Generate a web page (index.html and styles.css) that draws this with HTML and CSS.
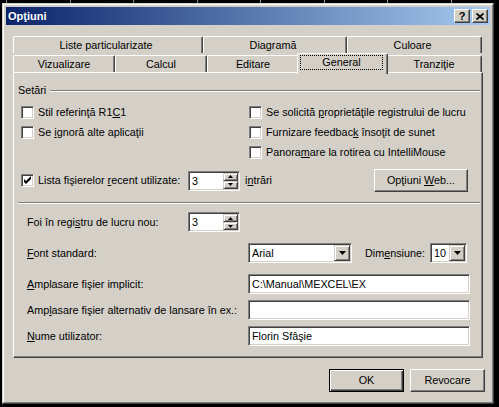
FILE: index.html
```html
<!DOCTYPE html>
<html lang="ro">
<head>
<meta charset="utf-8">
<title>Opţiuni</title>
<link rel="stylesheet" href="styles.css">
</head>
<body>
<div class="desk"></div>
<div class="window">
  <div class="frame">
    <div class="titlebar">
      <span class="title">Opţiuni</span>
      <span class="capbtn">?</span>
      <span class="capbtn"><svg class="xicon" viewBox="0 0 8 7" width="8" height="7"><path d="M0.5 0.5 L7.5 6.5 M7.5 0.5 L0.5 6.5" stroke="#000" stroke-width="1.7" fill="none"/></svg></span>
    </div>
    <div class="client">
      <div class="tabs">
        <div class="tabrow row1">
          <div class="tab t-liste">Liste particularizate</div>
          <div class="tab t-diag">Diagramă</div>
          <div class="tab t-cul">Culoare</div>
        </div>
        <div class="tabrow row2">
          <div class="tab t-viz">Vizualizare</div>
          <div class="tab t-calc">Calcul</div>
          <div class="tab t-edit">Editare</div>
          <div class="tab t-gen active"><span class="focus">General</span></div>
          <div class="tab t-tranz">Tranziţie</div>
        </div>
      </div>
      <div class="panel">
        <div class="group-head"><span>Setări</span><span class="etch"></span></div>
        <div class="checks">
          <div class="chk"><span class="box"></span><span>Stil referinţă R1<u>C</u>1</span></div>
          <div class="chk"><span class="box"></span><span>Se solicită <u>p</u>roprietăţile registrului de lucru</span></div>
          <div class="chk"><span class="box"></span><span>Se <u>i</u>gnoră alte aplicaţii</span></div>
          <div class="chk"><span class="box"></span><span>Furnizare feedbac<u>k</u> însoţit de sunet</span></div>
          <div></div>
          <div class="chk"><span class="box"></span><span>Panora<u>m</u>are la rotirea cu IntelliMouse</span></div>
        </div>
        <div class="recent">
          <div class="chk recent-label"><span class="box"><svg viewBox="0 0 11 11" width="11" height="11"><path d="M2 4 L4 6 L9 1 L9 4 L4 9 L2 7 Z" fill="#000"/></svg></span><span>Lista fişierelor <u>r</u>ecent utilizate:</span></div>
          <div class="spin">
            <span class="spin-val">3</span>
            <span class="spin-btns">
              <span class="sbtn"><svg viewBox="0 0 5 3" width="5" height="3"><path d="M2.5 0 L5 3 L0 3 Z" fill="#000"/></svg></span>
              <span class="sbtn"><svg viewBox="0 0 5 3" width="5" height="3"><path d="M0 0 L5 0 L2.5 3 Z" fill="#000"/></svg></span>
            </span>
          </div>
          <span class="unit">i<u>n</u>trări</span>
          <button class="btn web"><span>Opţiuni <u>W</u>eb...</span></button>
        </div>
        <div class="sep"></div>
        <div class="field row-foi">
          <span class="flabel lab-foi">Foi în regi<u>s</u>tru de lucru nou:</span>
          <div class="spin">
            <span class="spin-val">3</span>
            <span class="spin-btns">
              <span class="sbtn"><svg viewBox="0 0 5 3" width="5" height="3"><path d="M2.5 0 L5 3 L0 3 Z" fill="#000"/></svg></span>
              <span class="sbtn"><svg viewBox="0 0 5 3" width="5" height="3"><path d="M0 0 L5 0 L2.5 3 Z" fill="#000"/></svg></span>
            </span>
          </div>
        </div>
        <div class="field row-font">
          <span class="flabel lab-wide"><u>F</u>ont standard:</span>
          <div class="combo combo-font"><span class="combo-val">Arial</span><span class="dd"><svg viewBox="0 0 7 4" width="7" height="4"><path d="M0 0 H7 L3.5 4 Z" fill="#000"/></svg></span></div>
          <span class="flabel lab-dim">Dim<u>e</u>nsiune:</span>
          <div class="combo combo-size"><span class="combo-val">10</span><span class="dd"><svg viewBox="0 0 7 4" width="7" height="4"><path d="M0 0 H7 L3.5 4 Z" fill="#000"/></svg></span></div>
        </div>
        <div class="field row-impl">
          <span class="flabel lab-wide"><u>A</u>mplasare fişier implicit:</span>
          <div class="edit">C:\Manual\MEXCEL\EX</div>
        </div>
        <div class="field row-alt">
          <span class="flabel lab-wide">Amp<u>l</u>asare fişier alternativ de lansare în ex.:</span>
          <div class="edit"></div>
        </div>
        <div class="field row-user">
          <span class="flabel lab-wide"><u>N</u>ume utilizator:</span>
          <div class="edit">Florin Sfâşie</div>
        </div>
      </div>
      <div class="actions">
        <button class="btn default"><span>OK</span></button>
        <button class="btn"><span>Revocare</span></button>
      </div>
    </div>
  </div>
</div>
</body>
</html>
```
FILE: styles.css
```css
* { box-sizing: border-box; }
html, body { margin: 0; padding: 0; }
body {
  width: 499px;
  height: 407px;
  overflow: hidden;
  background: #000;
  font-family: "Liberation Sans", Arial, sans-serif;
  font-size: 10.8px;
  line-height: 13px;
  color: #000;
}
u { text-decoration: underline; text-underline-offset: 1px; }
button { font: inherit; color: #000; padding: 0; margin: 0; }

.desk {
  height: 3px;
  background: repeating-linear-gradient(90deg, transparent 0 6px, #8c8c8c 6px 7px, transparent 7px 63.5px);
}

.window {
  margin-left: 2px;
  width: 492px;
  height: 401px;
  background: #d4d0c8;
  border: 1px solid;
  border-color: #d4d0c8 #404040 #404040 #d4d0c8;
}
.frame {
  height: 100%;
  border: 1px solid;
  border-color: #fff #808080 #808080 #fff;
  padding: 2px;
  display: flex;
  flex-direction: column;
}

.titlebar {
  height: 18px;
  flex: none;
  display: flex;
  align-items: center;
  gap: 2px;
  padding: 0 2px 0 1px;
  background: linear-gradient(90deg, #0a246a, #a6caf0);
}
.title {
  flex: 1;
  color: #fff;
  font-weight: bold;
  font-size: 11px;
  padding-left: 1px;
}
.capbtn {
  width: 16px;
  height: 14px;
  display: flex;
  align-items: center;
  justify-content: center;
  background: #d4d0c8;
  border: 1px solid;
  border-color: #fff #404040 #404040 #fff;
  box-shadow: inset -1px -1px #808080;
  font-weight: bold;
  font-size: 11px;
  line-height: 1;
}
.xicon { display: block; }

.client {
  flex: 1;
  padding: 9px 0 0 7px;
  display: flex;
  flex-direction: column;
}
.tabs { width: 470px; flex: none; }
.tabrow { display: flex; height: 19px; }
.tab {
  flex: none;
  margin-top: 2px;
  height: 17px;
  display: flex;
  align-items: center;
  justify-content: center;
  background: #d4d0c8;
  border-top: 1px solid #fff;
  border-left: 1px solid #fff;
  border-right: 1px solid #404040;
  border-radius: 2px 2px 0 0;
  box-shadow: inset -1px 0 #808080;
  white-space: nowrap;
}
.row1 .tab { padding-right: 4px; }
.t-liste { width: 190px; }
.t-diag { width: 144px; }
.t-cul { width: 135px; }
.t-viz { width: 102px; }
.t-calc { width: 92px; }
.t-edit { width: 92px; }
.t-gen { width: 87px; }
.t-tranz { width: 96px; }
.tab.active {
  width: 91px;
  margin: 0 -2px;
  height: 21px;
  z-index: 1;
  align-items: flex-start;
  justify-content: flex-start;
}
.focus {
  display: block;
  width: 83px;
  height: 15px;
  margin: 1px 0 0 2px;
  border: 1px dotted #000;
  text-align: center;
  line-height: 12px;
}

.panel {
  width: 470px;
  height: 286px;
  flex: none;
  border: 1px solid;
  border-color: #fff #404040 #404040 #fff;
  box-shadow: inset -1px -1px #808080;
  display: flex;
  flex-direction: column;
}
.group-head {
  margin: 11px 2px 0 4px;
  height: 13px;
  display: flex;
  align-items: center;
}
.etch, .sep {
  height: 2px;
  border-top: 1px solid #808080;
  border-bottom: 1px solid #fff;
}
.etch { flex: 1; margin-left: 4px; }

.checks {
  margin-top: 5px;
  padding-left: 7px;
  display: grid;
  grid-template-columns: 228px 1fr;
  grid-auto-rows: 20px;
}
.chk {
  display: flex;
  align-items: center;
  gap: 4px;
  white-space: nowrap;
}
.box {
  width: 13px;
  height: 13px;
  flex: none;
  background: #fff;
  border: 1px solid;
  border-color: #808080 #fff #fff #808080;
  box-shadow: inset 1px 1px #404040, inset -1px -1px #d4d0c8;
}
.box svg { display: block; }

.recent {
  margin: 7px 14px 0 7px;
  height: 23px;
  display: flex;
  align-items: center;
}
.recent-label { width: 167px; }
.unit { margin-left: 5px; }

.spin, .combo, .edit {
  background: #fff;
  border: 1px solid;
  border-color: #808080 #fff #fff #808080;
  box-shadow: inset 1px 1px #404040, inset -1px -1px #d4d0c8;
}
.spin {
  width: 52px;
  height: 20px;
  padding: 1px;
  display: flex;
  flex: none;
}
.spin-val { flex: 1; padding-left: 2px; line-height: 16px; }
.spin-btns { width: 15px; display: flex; flex-direction: column; }
.sbtn, .dd {
  flex: 1;
  display: flex;
  align-items: center;
  justify-content: center;
  background: #d4d0c8;
  border: 1px solid;
  border-color: #d4d0c8 #404040 #404040 #d4d0c8;
  box-shadow: inset 1px 1px #fff, inset -1px -1px #808080;
}
.sbtn svg, .dd svg { display: block; }

.btn {
  height: 23px;
  background: #d4d0c8;
  border: 1px solid;
  border-color: #fff #404040 #404040 #fff;
  box-shadow: inset -1px -1px #808080;
  display: flex;
  align-items: center;
  justify-content: center;
  white-space: nowrap;
}
.web { width: 94px; margin-left: auto; flex: none; }

.sep { margin: 10px 2px 0 4px; }

.field {
  height: 20px;
  padding-left: 13px;
  display: flex;
  align-items: center;
}
.flabel { flex: none; white-space: nowrap; }
.lab-foi { width: 161px; }
.lab-wide { width: 221px; }
.lab-dim { width: 65px; margin-left: 13px; }
.row-foi { margin-top: 8px; }
.row-font { margin-top: 11px; }
.row-impl { margin-top: 11px; }
.row-alt, .row-user { margin-top: 6px; }

.combo {
  height: 20px;
  padding: 1px;
  display: flex;
  flex: none;
}
.combo-font { width: 104px; }
.combo-size { width: 37px; }
.combo-val { flex: 1; padding-left: 2px; line-height: 16px; }
.dd { flex: none; width: 16px; }

.edit {
  width: 222px;
  height: 20px;
  padding: 1px 3px;
  line-height: 16px;
  flex: none;
}

.actions {
  margin-top: 11px;
  padding-right: 5px;
  display: flex;
  justify-content: flex-end;
  gap: 6px;
}
.actions .btn { width: 75px; }
.btn.default {
  border-color: #000;
  box-shadow: inset 1px 1px #fff, inset -1px -1px #404040, inset -2px -2px #808080;
}
```
